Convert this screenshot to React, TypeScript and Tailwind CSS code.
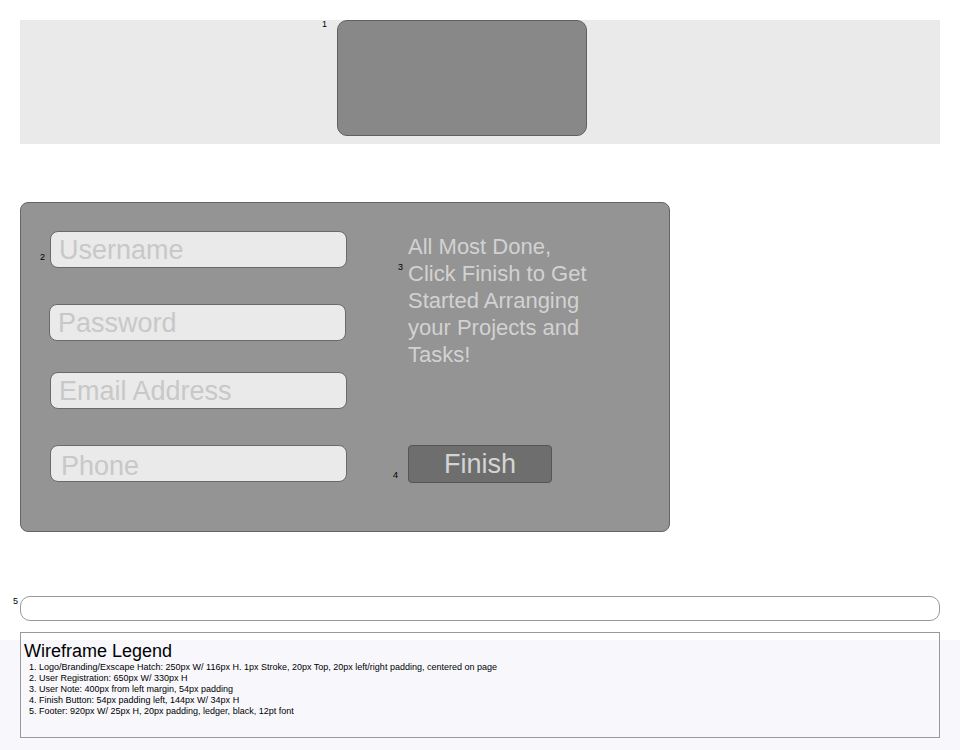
import React from "react";

const Num = ({ n, className }: { n: string; className: string }) => (
  <span className={"absolute text-[9px] leading-none text-black " + className}>{n}</span>
);

const Field = ({ label, className = "" }: { label: string; className?: string }) => (
  <div
    className={
      "h-[37px] w-[297px] rounded-[8px] border border-[#6a6a6a] bg-[#eaeaea] pl-[8px] text-[27px] leading-[36px] text-[#c8c8c8] " +
      className
    }
  >
    {label}
  </div>
);

export default function App() {
  return (
    <div
      className="relative h-[750px] w-[960px] overflow-hidden bg-white"
      style={{ fontFamily: '"Liberation Sans", Arial, sans-serif' }}
    >
      <div className="px-[20px] pt-[20px]">
        {/* Header band */}
        <div className="relative h-[124px] w-[920px] bg-[#eaeaea]">
          <div className="relative ml-[317px] h-[116px] w-[250px] rounded-[10px] border border-[#606060] bg-[#888888]">
            <Num n="1" className="left-[-16px] top-[-1px]" />
          </div>
        </div>

        {/* Registration panel */}
        <div className="relative mt-[58px] flex h-[330px] w-[650px] rounded-[8px] border border-[#666] bg-[#949494]">
          <div className="flex flex-col pl-[29px] pt-[28px]">
            <div className="relative">
              <Num n="2" className="left-[-10px] top-[22px]" />
              <Field label="Username" />
            </div>
            <Field label="Password" className="mt-[36px] ml-[-1px] pl-[7px]" />
            <Field label="Email Address" className="mt-[31px]" />
            <Field label="Phone" className="mt-[36px] pl-[10px] leading-[41px]" />
          </div>
          <div className="ml-[61px] flex flex-col pt-[30px]">
            <div className="relative w-[190px] text-[22px] leading-[27px] text-[#d2d2d2]">
              <Num n="3" className="left-[-10px] top-[30px] text-[8px]" />
              All Most Done, Click Finish to Get Started Arranging your Projects and Tasks!
            </div>
            <div className="relative mt-[77px]">
              <Num n="4" className="left-[-15px] top-[26px]" />
              <div className="flex h-[38px] w-[144px] items-center justify-center rounded-[4px] border border-[#555] bg-[#6e6e6e] text-[27px] leading-none text-[#d4d4d4]">
                Finish
              </div>
            </div>
          </div>
        </div>

        {/* Footer bar */}
        <div className="relative mt-[64px] h-[25px] w-[920px] rounded-[10px] border border-[#999] bg-white">
          <Num n="5" className="left-[-8px] top-[0px]" />
        </div>
      </div>

      {/* Legend area */}
      <div className="mt-[11px] h-[118px] bg-[linear-gradient(to_bottom,#ffffff_8px,#f8f8fc_8px)] px-[20px]">
        <div className="h-[106px] w-[920px] border border-[#999] px-[3px] pt-[8px]">
          <div className="text-[18px] leading-[20px] text-black">Wireframe Legend</div>
          <div className="mt-[1px] pl-[5px] text-[9px] leading-[11px] text-black">
            <div>1. Logo/Branding/Exscape Hatch: 250px W/ 116px H. 1px Stroke, 20px Top, 20px left/right padding, centered on page</div>
            <div>2. User Registration: 650px W/ 330px H</div>
            <div>3. User Note: 400px from left margin, 54px padding</div>
            <div>4. Finish Button: 54px padding left, 144px W/ 34px H</div>
            <div>5. Footer: 920px W/ 25px H, 20px padding, ledger, black, 12pt font</div>
          </div>
        </div>
      </div>
    </div>
  );
}
